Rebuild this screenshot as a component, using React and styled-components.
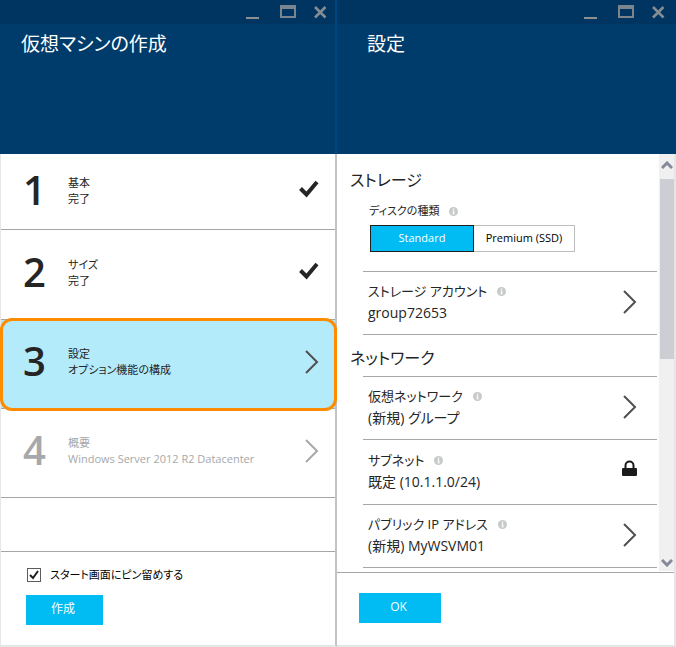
import React, { useState } from "react";
import styled, { createGlobalStyle } from "styled-components";

const GlobalStyle = createGlobalStyle`
  *, *::before, *::after { box-sizing: border-box; }
  body {
    margin: 0;
    background: #fff;
    color: #252525;
    font-family: "Open Sans", "Noto Sans CJK JP", sans-serif;
    font-feature-settings: "palt";
    font-size: 11px;
    line-height: 16px;
  }
  button, input { font: inherit; font-feature-settings: inherit; color: inherit; margin: 0; }
  button { border: 0; background: none; padding: 0; cursor: pointer; text-align: left; }
  h1, h2, p, ol, ul { margin: 0; padding: 0; font-weight: 400; }
  ol, ul { list-style: none; }
  svg { display: block; flex: none; }
`;

const Page = styled.main`
  display: grid;
  grid-template-columns: minmax(0, 337fr) minmax(0, 339fr);
  min-height: 100vh;
`;

const Blade = styled.section`
  display: flex;
  flex-direction: column;
  min-width: 0;
`;

const BladeHeader = styled.header`
  height: 154px;
  background: #003c6b;
  color: #fff;
  border-right: ${(p) => (p.$divided ? "2px solid #004580" : "0")};
`;

const WindowBar = styled.div`
  display: flex;
  justify-content: flex-end;
  align-items: center;
  gap: 16px;
  height: 24px;
  padding-right: ${(p) => p.$end}px;
  background: #003562;
`;

const WindowButton = styled.button`
  display: grid;
  place-items: center;
  width: 18px;
  height: 24px;
`;

const BladeTitle = styled.h1`
  padding: 6px 0 0 ${(p) => p.$start}px;
  font-size: 19px;
  line-height: 28px;
`;

const BladeBody = styled.div`
  display: flex;
  flex-direction: column;
  flex: 1;
  border-style: solid;
  border-color: #e6e6e6;
  border-width: ${(p) => (p.$divided ? "0 0 2px 1px" : "0 2px 2px 0")};
  ${(p) => p.$divided && "border-right: 2px solid #c3c3c3;"}
`;

const Steps = styled.ol`
  flex: 1;
`;

const StepItem = styled.li`
  position: relative;
  border-bottom: 1px solid #a6a6a6;
  background: ${(p) => (p.$active ? "#b3ebfb" : "#fff")};
  color: ${(p) => (p.$disabled ? "#a6a8ab" : "#252525")};
  ${(p) =>
    p.$active &&
    `
    z-index: 1;
    &::after {
      content: "";
      position: absolute;
      inset: -2px -2px -3px -1px;
      border: 3px solid #ff8c00;
      border-radius: 12px;
      pointer-events: none;
    }
  `}
`;

const StepButton = styled.button`
  display: grid;
  grid-template-columns: 45px minmax(0, 1fr) 20px;
  align-items: center;
  width: 100%;
  min-height: ${(p) => p.$height}px;
  padding: 0 16px ${(p) => (p.$height < 80 ? 2 : 4)}px 22px;

  > svg { justify-self: end; }
`;

const StepNumber = styled.span`
  font-family: "Open Sans", sans-serif;
  font-size: 40px;
  line-height: 48px;
  font-weight: 600;
  padding-bottom: 2px;
`;

const StepLine = styled.span`
  display: block;
`;

const CreateFooter = styled.footer`
  display: flex;
  flex-direction: column;
  align-items: flex-start;
  gap: 12px;
  min-height: 94px;
  padding: 15px 25px 20px;
  border-top: 1px solid #a6a6a6;
`;

const PinLabel = styled.label`
  display: flex;
  align-items: center;
  gap: 9px;
  color: #000;
`;

const CheckHolder = styled.span`
  display: grid;
  margin-left: 1px;
  > * { grid-area: 1 / 1; place-self: center; pointer-events: none; }
  > input { pointer-events: auto; }
  > input:not(:checked) + svg { visibility: hidden; }
`;

const CheckBox = styled.input`
  appearance: none;
  width: 14px;
  height: 14px;
  border: 1px solid #5c5c5c;
  background: #fff;
`;

const PrimaryButton = styled.button`
  min-width: ${(p) => p.$width}px;
  height: 30px;
  padding: 0 3px 2px 0;
  background: #00bcf2;
  color: #fff;
  font-size: 12px;
  text-align: center;
`;

const ScrollRegion = styled.div`
  display: flex;
  flex: 1;
  padding-bottom: 1px;
`;

const Settings = styled.div`
  flex: 1;
  min-width: 0;
  padding: 13px 2px 0 0;
`;

const SectionTitle = styled.h2`
  padding-left: 13px;
  font-size: 16px;
  line-height: 26px;
`;

const DiskField = styled.div`
  padding: 10px 0 19px 32px;
`;

const FieldLabel = styled.span`
  display: flex;
  align-items: center;
  gap: 10px;
`;

const Segments = styled.div`
  display: flex;
  margin: 6px 0 0 1px;
`;

const Segment = styled.button`
  min-width: ${(p) => (p.$selected ? 104 : 101)}px;
  height: 27px;
  padding: 0 10px 1px;
  border: 1px solid ${(p) => (p.$selected ? "#1e1e1e" : "#bdbdbd")};
  border-left-width: ${(p) => (p.$selected ? 1 : 0)}px;
  background: ${(p) => (p.$selected ? "#00bcf2" : "#fff")};
  color: ${(p) => (p.$selected ? "#fff" : "#000")};
  text-align: center;
  white-space: nowrap;
`;

const SettingList = styled.ul`
  margin: ${(p) => p.$before}px 0 ${(p) => p.$after}px 26px;
  border-top: 1px solid #a6a6a6;
`;

const SettingItem = styled.li`
  border-bottom: 1px solid #a6a6a6;
`;

const SettingButton = styled.button`
  display: flex;
  align-items: center;
  justify-content: space-between;
  width: 100%;
  min-height: ${(p) => (p.$tall ? 64 : 62)}px;
  padding: 0 20px 2px 5px;
  font-size: 13px;
  line-height: 22px;
`;

const SettingText = styled.span`
  display: block;
  font-size: 14px;
`;

const SettingFooter = styled.footer`
  min-height: 73px;
  padding: 20px 22px;
  border-top: 1px solid #a6a6a6;
`;

const ScrollBar = styled.div`
  display: flex;
  flex-direction: column;
  width: 15px;
  background: #f0f0f0;
`;

const ScrollArrow = styled.button`
  display: grid;
  place-items: center;
  height: ${(p) => (p.$up ? 25 : 16)}px;
  padding-bottom: ${(p) => (p.$up ? 3 : 0)}px;
`;

const ScrollTrack = styled.div`
  flex: 1;
  padding-left: 1px;
`;

const ScrollThumb = styled.div`
  height: 48%;
  min-height: 179px;
  background: #cdced4;
`;

const WINDOW_ICONS = {
  最小化: <path d="M2 14h13v2H2z" fill="#8b9093" />,
  最大化: <path d="M2 2h16v13H2zM4 6v7h12V6z" fill="#7b858e" fillRule="evenodd" />,
  閉じる: <path d="M3 4l10.500 10.500M13.500 4L3 14.500" fill="none" stroke="#858d94" strokeWidth="2.600" />,
};

function WindowControls({ end }) {
  return (
    <WindowBar $end={end}>
      {Object.entries(WINDOW_ICONS).map(([name, shape]) => (
        <WindowButton key={name} type="button" aria-label={name}>
          <svg width="18" height="18" viewBox="0 0 18 18">{shape}</svg>
        </WindowButton>
      ))}
    </WindowBar>
  );
}

function Chevron({ muted }) {
  return (
    <svg width="14" height="24" viewBox="0 0 14 24" fill="none" stroke={muted ? "#a6a8ab" : "#505050"} strokeWidth="2">
      <path d="M1 1l11 11L1 23" />
    </svg>
  );
}

function DoneMark() {
  return (
    <svg width="20" height="22" viewBox="0 0 20 22" fill="none" stroke="#252525" strokeWidth="4">
      <path d="M1.500 8.500l6 6L18 2" />
    </svg>
  );
}

function InfoIcon() {
  return (
    <svg width="9" height="9" viewBox="0 0 9 9" aria-hidden="true">
      <circle cx="4.500" cy="4.500" r="4.500" fill="#c8caca" />
      <path d="M4 1.500h1.200v1.200H4zM3.500 3.500h1.700v3h.6v.8H3.400v-.8H4V4.300h-.5z" fill="#fff" />
    </svg>
  );
}

function LockIcon() {
  return (
    <svg width="15" height="22" viewBox="0 0 15 22">
      <path d="M3.500 8V5.500a4 4 0 018 0V8" fill="none" stroke="#1b1b1b" strokeWidth="2" />
      <rect y="8" width="15" height="8" rx="1" fill="#1b1b1b" />
    </svg>
  );
}

const STEPS = [
  { title: "基本", detail: "完了", state: "done", height: 75 },
  { title: "サイズ", detail: "完了", state: "done", height: 89 },
  { title: "設定", detail: "オプション機能の構成", state: "active", height: 88 },
  { title: "概要", detail: "Windows Server 2012 R2 Datacenter", state: "disabled", height: 88 },
];

const NETWORK = [
  { label: "仮想ネットワーク", value: "(新規) グループ" },
  { label: "サブネット", value: "既定 (10.1.1.0/24)", locked: true, tall: true },
  { label: "パブリック IP アドレス", value: "(新規) MyWSVM01" },
];

function Step({ number, title, detail, state, height }) {
  const disabled = state === "disabled";
  return (
    <StepItem $active={state === "active"} $disabled={disabled}>
      <StepButton type="button" disabled={disabled} $height={height}>
        <StepNumber>{number}</StepNumber>
        <span>
          <StepLine>{title}</StepLine>
          <StepLine>{detail}</StepLine>
        </span>
        {state === "done" ? <DoneMark /> : <Chevron muted={disabled} />}
      </StepButton>
    </StepItem>
  );
}

function Setting({ label, value, locked, tall }) {
  return (
    <SettingItem>
      <SettingButton type="button" $tall={tall}>
        <span>
          <FieldLabel>{label}<InfoIcon /></FieldLabel>
          <SettingText>{value}</SettingText>
        </span>
        {locked ? <LockIcon /> : <Chevron />}
      </SettingButton>
    </SettingItem>
  );
}

export default function App() {
  const [pinned, setPinned] = useState(true);
  const [disk, setDisk] = useState("Standard");
  return (
    <>
      <GlobalStyle />
      <Page>
        <Blade>
          <BladeHeader $divided>
            <WindowControls end={5} />
            <BladeTitle $start={21}>仮想マシンの作成</BladeTitle>
          </BladeHeader>
          <BladeBody $divided>
            <Steps>
              {STEPS.map((step, i) => (
                <Step key={step.title} number={i + 1} {...step} />
              ))}
            </Steps>
            <CreateFooter>
              <PinLabel>
                <CheckHolder>
                  <CheckBox type="checkbox" checked={pinned} onChange={(e) => setPinned(e.target.checked)} />
                  <svg width="10" height="10" viewBox="0 0 10 10" fill="none" stroke="#1e1e1e" strokeWidth="2">
                    <path d="M1 5l3 3 5-7" />
                  </svg>
                </CheckHolder>
                スタート画面にピン留めする
              </PinLabel>
              <PrimaryButton type="button" $width={77}>作成</PrimaryButton>
            </CreateFooter>
          </BladeBody>
        </Blade>

        <Blade>
          <BladeHeader>
            <WindowControls end={8} />
            <BladeTitle $start={30}>設定</BladeTitle>
          </BladeHeader>
          <BladeBody>
            <ScrollRegion>
              <Settings>
                <SectionTitle>ストレージ</SectionTitle>
                <DiskField>
                  <FieldLabel id="disk-type">ディスクの種類<InfoIcon /></FieldLabel>
                  <Segments role="group" aria-labelledby="disk-type">
                    {["Standard", "Premium (SSD)"].map((name) => (
                      <Segment
                        key={name}
                        type="button"
                        aria-pressed={disk === name}
                        $selected={disk === name}
                        onClick={() => setDisk(name)}
                      >
                        {name}
                      </Segment>
                    ))}
                  </Segments>
                </DiskField>
                <SettingList $before={0} $after={10}>
                  <Setting label="ストレージ アカウント" value="group72653" />
                </SettingList>
                <SectionTitle>ネットワーク</SectionTitle>
                <SettingList $before={5} $after={0}>
                  {NETWORK.map((item) => (
                    <Setting key={item.label} {...item} />
                  ))}
                </SettingList>
              </Settings>
              <ScrollBar>
                <ScrollArrow type="button" aria-label="上へスクロール" $up>
                  <svg width="12" height="8" viewBox="0 0 12 8" fill="none" stroke="#868999" strokeWidth="3">
                    <path d="M1 7l5-5 5 5" />
                  </svg>
                </ScrollArrow>
                <ScrollTrack><ScrollThumb /></ScrollTrack>
                <ScrollArrow type="button" aria-label="下へスクロール">
                  <svg width="12" height="8" viewBox="0 0 12 8" fill="none" stroke="#868999" strokeWidth="3">
                    <path d="M1 1l5 5 5-5" />
                  </svg>
                </ScrollArrow>
              </ScrollBar>
            </ScrollRegion>
            <SettingFooter>
              <PrimaryButton type="button" $width={82}>OK</PrimaryButton>
            </SettingFooter>
          </BladeBody>
        </Blade>
      </Page>
    </>
  );
}
